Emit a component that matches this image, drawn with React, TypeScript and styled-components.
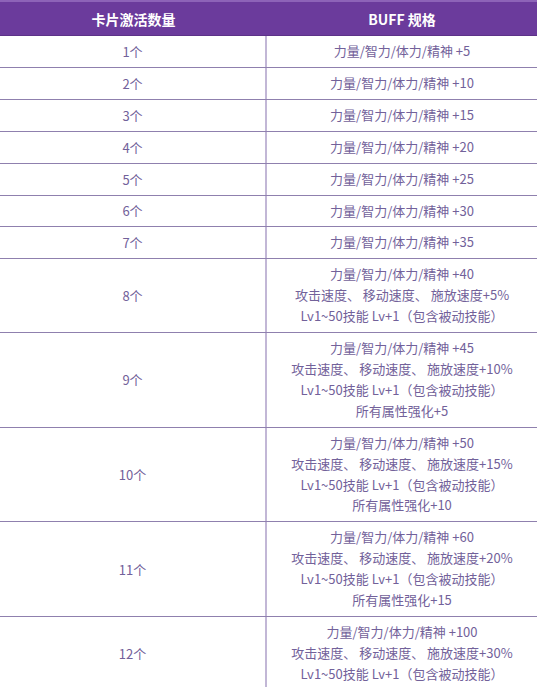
import styled, { createGlobalStyle } from "styled-components";

const GlobalStyle = createGlobalStyle`
  html, body {
    margin: 0;
    padding: 0;
    background: #fff;
  }
  body {
    font-family: "Noto Sans CJK SC", "Noto Sans", sans-serif;
    overflow: hidden;
  }
`;

const Table = styled.div`
  width: 537px;
  color: #72619a;
  font-size: 13px;
`;

const Header = styled.div`
  display: grid;
  grid-template-columns: 267px 1fr;
  height: 36px;
  background: #6b3b9c;
  border-top: 2px solid #8d63b8;
  box-sizing: border-box;
  border-bottom: 1px solid #5d3288;
  color: #fff;
  font-weight: bold;
  font-size: 14px;
`;

const HeadCell = styled.div`
  display: flex;
  align-items: center;
  justify-content: center;
`;

const Row = styled.div`
  display: grid;
  grid-template-columns: 267px 1fr;
  border-bottom: 1px solid #8f80ae;
`;

const CountCell = styled.div`
  display: flex;
  align-items: center;
  justify-content: center;
  border-right: 2px solid #c2b7d6;
`;

const BuffCell = styled.div`
  padding: 5px 0;
  line-height: 20.9px;
  text-align: center;
`;

const rows: { count: string; lines: string[] }[] = [
  { count: "1个", lines: ["力量/智力/体力/精神 +5"] },
  { count: "2个", lines: ["力量/智力/体力/精神 +10"] },
  { count: "3个", lines: ["力量/智力/体力/精神 +15"] },
  { count: "4个", lines: ["力量/智力/体力/精神 +20"] },
  { count: "5个", lines: ["力量/智力/体力/精神 +25"] },
  { count: "6个", lines: ["力量/智力/体力/精神 +30"] },
  { count: "7个", lines: ["力量/智力/体力/精神 +35"] },
  {
    count: "8个",
    lines: [
      "力量/智力/体力/精神 +40",
      "攻击速度、 移动速度、 施放速度+5%",
      "Lv1~50技能 Lv+1（包含被动技能）",
    ],
  },
  {
    count: "9个",
    lines: [
      "力量/智力/体力/精神 +45",
      "攻击速度、 移动速度、 施放速度+10%",
      "Lv1~50技能 Lv+1（包含被动技能）",
      "所有属性强化+5",
    ],
  },
  {
    count: "10个",
    lines: [
      "力量/智力/体力/精神 +50",
      "攻击速度、 移动速度、 施放速度+15%",
      "Lv1~50技能 Lv+1（包含被动技能）",
      "所有属性强化+10",
    ],
  },
  {
    count: "11个",
    lines: [
      "力量/智力/体力/精神 +60",
      "攻击速度、 移动速度、 施放速度+20%",
      "Lv1~50技能 Lv+1（包含被动技能）",
      "所有属性强化+15",
    ],
  },
  {
    count: "12个",
    lines: [
      "力量/智力/体力/精神 +100",
      "攻击速度、 移动速度、 施放速度+30%",
      "Lv1~50技能 Lv+1（包含被动技能）",
    ],
  },
];

export default function App() {
  return (
    <>
      <GlobalStyle />
      <Table>
        <Header>
          <HeadCell>卡片激活数量</HeadCell>
          <HeadCell>BUFF 规格</HeadCell>
        </Header>
        {rows.map((r) => (
          <Row key={r.count}>
            <CountCell>{r.count}</CountCell>
            <BuffCell>
              {r.lines.map((l) => (
                <div key={l}>{l}</div>
              ))}
            </BuffCell>
          </Row>
        ))}
      </Table>
    </>
  );
}
